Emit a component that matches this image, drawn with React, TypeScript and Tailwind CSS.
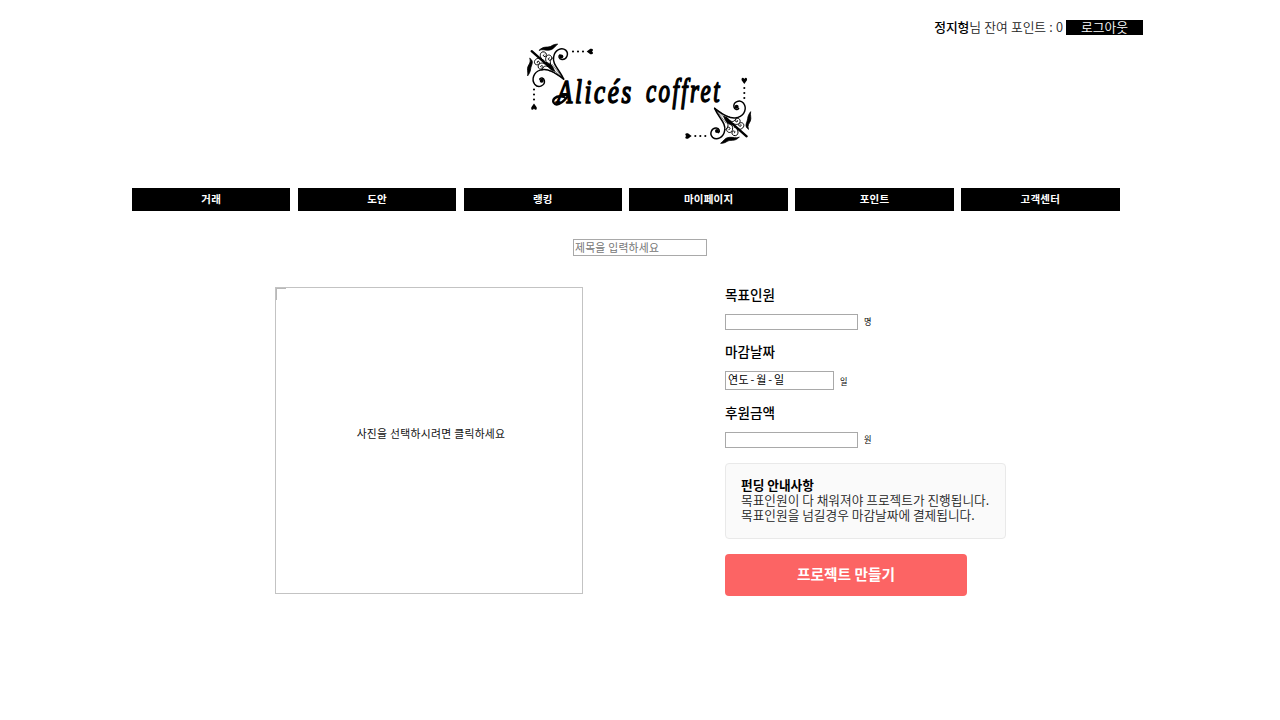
import type { ReactNode } from "react";

const NAV = ["거래", "도안", "랭킹", "마이페이지", "포인트", "고객센터"];

function Ornament() {
  return (
    <g fill="none" stroke="#000" strokeLinecap="round">
      <path d="M29 38 L90 92" strokeWidth="7" />
      <path d="M75 72 Q93 77 98 99 Q78 92 75 72 Z" fill="#000" strokeWidth="2" />
      <path d="M125 122 C112 92 90 78 95 55 C98 34 119 25 131 35 C142 45 134 64 120 63 C111 62 108 53 114 49" strokeWidth="4.4" />
      <path d="M125 122 C100 103 78 88 55 95 C34 101 28 123 38 137 C50 151 70 140 67 126 C65 117 56 116 53 122" strokeWidth="4.4" />
      <circle cx="118" cy="54" r="6" fill="#000" stroke="none" />
      <circle cx="59" cy="127" r="6" fill="#000" stroke="none" />
      <path d="M125 122 L88 87 M122 119 Q102 92 91 78 M122 120 Q98 100 80 96" strokeWidth="1.5" />
      <path d="M52 35 C66 20 78 30 89 22 C95 18 101 17 107 17 C98 23 94 35 80 35 C69 36 63 31 52 35 Z" fill="#000" strokeWidth="2.4" />
      <path d="M24 60 C38 69 27 80 26 91 C25 101 20 108 17 112 C19 100 14 93 18 84 C21 76 27 73 24 60 Z" fill="#000" strokeWidth="2.4" />
      <path d="M66 66 C51 60 52 41 63 40 C73 39 77 52 69 54 C64 55 62 50 66 48 M74 73 C66 60 74 47 83 50 C94 54 88 68 81 65 C77 62 79 58 82 58 M88 81 C80 70 88 60 94 57" strokeWidth="3" />
      <path d="M56 59 C43 56 33 68 39 76 C46 84 57 74 51 69 C47 66 44 70 46 73 M68 76 C56 68 44 80 50 89 C57 97 68 86 61 82 C57 80 54 84 57 86 M77 84 C67 78 61 89 60 95" strokeWidth="3" />
      <g fill="#000" stroke="none">
        <circle cx="153" cy="39" r="3.2" />
        <circle cx="168" cy="39" r="3.2" />
        <circle cx="183" cy="39" r="3.2" />
        <circle cx="36" cy="153" r="3.2" />
        <circle cx="36" cy="168" r="3.2" />
        <circle cx="36" cy="183" r="3.2" />
        <path d="M194 39 L205 31 C214 29 215 36 210 39 C215 42 214 49 205 47 Z" />
        <path d="M36 195 L44 206 C46 215 39 216 36 210 C33 216 26 215 28 206 Z" />
      </g>
    </g>
  );
}

function Logo() {
  return (
    <svg className="block h-[112px] w-[240px]" viewBox="520 36 240 112" aria-label="Alicés coffret">
      <g transform="translate(522 38.5) scale(.3333)">
        <Ornament />
      </g>
      <g transform="translate(756.3 149) rotate(180) scale(.3333)">
        <Ornament />
      </g>
      <g fontFamily="Liberation Serif, serif" fontStyle="italic" stroke="#000" strokeWidth="1.6" strokeLinejoin="round" strokeLinecap="round">
        <text x="557" y="103" fontSize="33" letterSpacing="3.5" textLength="77" lengthAdjust="spacingAndGlyphs">Alicés</text>
        <text x="646" y="102" fontSize="33" letterSpacing="3.5" textLength="76" lengthAdjust="spacingAndGlyphs">coffret</text>
        <path d="M564 97 C556 94 550 101 555 104 C559 106 564 101 568 96" fill="none" strokeWidth="2.4" />
      </g>
    </svg>
  );
}

function Field({ label, unit, children, className }: { label: string; unit: string; children: ReactNode; className: string }) {
  return (
    <div className={className}>
      <h3 className="h-[18px] text-[13.6px] leading-[16px] font-medium">{label}</h3>
      <div className="mt-[10px] flex items-end gap-[6px]">
        {children}
        <span className="origin-left scale-x-90 pb-px text-[9px] leading-[14px]">{unit}</span>
      </div>
    </div>
  );
}

export default function App() {
  return (
    <div className="flex h-[720px] w-[1280px] flex-col overflow-hidden bg-white font-['Noto_Sans_CJK_KR',sans-serif] text-black">
      <header className="flex h-9 items-start justify-end pt-5 pr-[137px] text-[12.8px] leading-[15px]">
        <p className="-mt-px mr-[3px] font-[350] tracking-[-0.1px] whitespace-nowrap text-[#222] [word-spacing:0.6px]">
          <b className="font-medium text-black">정지형</b>님 잔여 포인트 : 0
        </p>
        <button className="flex h-[15px] w-[77px] items-start justify-center bg-black leading-[13px] font-[350] text-white">
          <span className="-mt-px leading-[15px]">로그아웃</span>
        </button>
      </header>
      <div className="flex h-[152px] justify-center">
        <Logo />
      </div>
      <nav className="ml-[132px] grid h-[23px] w-[987.5px] grid-cols-6 gap-[7.4px]">
        {NAV.map((item) => (
          <a key={item} className="bg-black text-center text-[10.5px] leading-[22px] font-bold tracking-[0.2px] text-white">
            {item}
          </a>
        ))}
      </nav>
      <div className="mt-[28px] flex justify-center">
        <input
          placeholder="제목을 입력하세요"
          className="h-[17px] w-[134px] border border-[#a9a9a9] px-[1px] pb-[2px] text-[10.8px] leading-[14px] tracking-[0.25px] placeholder:text-[#757575]"
        />
      </div>
      <main className="mt-[31px] flex pl-[275px]">
        <div className="flex h-[307px] w-[308px] flex-col border border-[#c3c3c3]">
          <div className="h-3 w-[10px] border-t border-l border-[#b8b8b8]" />
          <p className="mt-[125px] pl-[4px] text-center text-[10.8px] leading-4 tracking-[0.3px] text-[#111]">사진을 선택하시려면 클릭하세요</p>
        </div>
        <section className="ml-[142px] flex flex-col">
          <Field label="목표인원" unit="명" className="-mt-px">
            <input className="h-4 w-[133px] border border-[#a9a9a9]" />
          </Field>
          <Field label="마감날짜" unit="일" className="mt-[13px]">
            <div className="h-[19px] w-[109px] border border-[#a9a9a9] pl-[2px] text-[11px] leading-[15px] tracking-[0.4px]">
              <span>연도</span>
              <span className="px-[1.5px]">-</span>
              <span>월</span>
              <span className="px-[1.5px]">-</span>
              <span>일</span>
            </div>
          </Field>
          <Field label="후원금액" unit="원" className="mt-[14px]">
            <input className="h-4 w-[133px] border border-[#a9a9a9]" />
          </Field>
          <div className="mt-[15px] h-[76px] w-[281px] rounded-[4px] border border-[#e9e9e9] bg-[#fafafa] pt-[13px] pl-[15px] text-[12.7px] leading-[15px] font-[350] whitespace-nowrap text-[#222]">
            <b className="block font-bold text-black">펀딩 안내사항</b>
            <p>목표인원이 다 채워져야 프로젝트가 진행됩니다.</p>
            <p>목표인원을 넘길경우 마감날짜에 결제됩니다.</p>
          </div>
          <button className="mt-[15px] h-[42px] w-[242px] rounded-[4px] bg-[#fc6464] pb-[2px] text-[14.7px] font-bold text-white">프로젝트 만들기</button>
        </section>
      </main>
    </div>
  );
}
